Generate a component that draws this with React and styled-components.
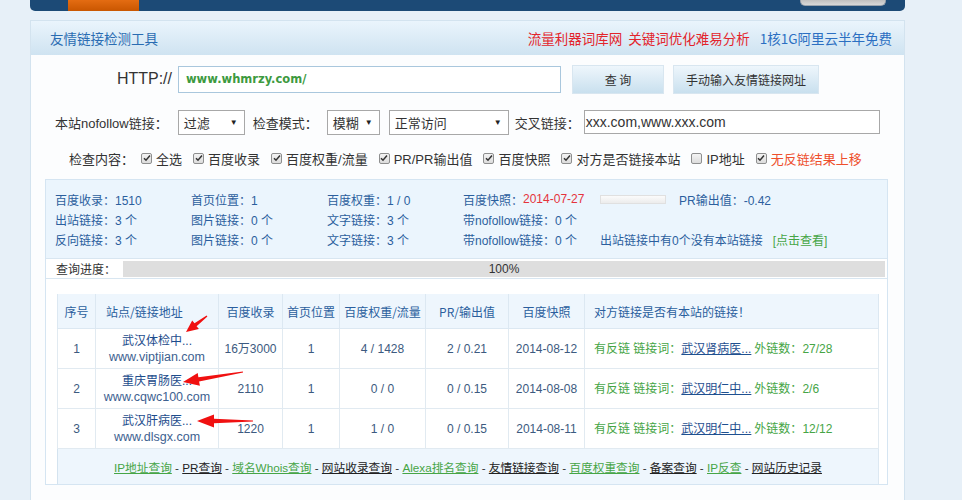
import React from "react";
import styled, { createGlobalStyle } from "styled-components";

const GlobalStyle = createGlobalStyle`
  html, body {
    margin: 0;
    padding: 0;
    background: #e7f0f8;
  }
  body {
    font-family: "Liberation Sans", "Noto Sans CJK SC", sans-serif;
    font-size: 12px;
    color: #333;
  }
`;

const Page = styled.div`
  position: relative;
  width: 875px;
  margin-left: 30px;
  height: 500px;
  overflow: hidden;
`;

const TopBar = styled.div`
  display: flex;
  justify-content: space-between;
  height: 11px;
  padding: 0 19px 0 38px;
  background: #1c4a76;
  border-radius: 0 0 5px 5px;
`;

const OrangeTab = styled.div`
  width: 71px;
  background: linear-gradient(#e46c12, #c95600);
`;

const GrayTab = styled.div`
  width: 84px;
  height: 5px;
  background: linear-gradient(#bfbfbf, #d8d8d8);
  border: 1px solid #9aa3ad;
  border-top: none;
  border-radius: 0 0 5px 5px;
`;

const Panel = styled.div`
  margin-top: 9px;
  background: #fcfdfe;
  border: 1px solid #d3e3ef;
  height: 480px;
`;

const PanelHeader = styled.div`
  display: flex;
  align-items: center;
  justify-content: space-between;
  height: 34px;
  padding: 0 12px 0 19px;
  background: linear-gradient(#eaf4fc, #cfe3f1);
  font-family: "Noto Sans CJK SC", sans-serif;
  font-size: 13.5px;
`;

const Title = styled.span`
  color: #2a6cb2;
`;

const HeaderLinks = styled.div`
  display: flex;
  gap: 6px;
`;

const HeaderLink = styled.a`
  color: ${(p) => (p.$blue ? "#2b6fc2" : "#e3242b")};
  margin-left: ${(p) => (p.$blue ? "4px" : "0")};
  text-decoration: none;
`;

const Body = styled.div`
  padding: 0 16px 0 14px;
`;

const UrlRow = styled.div`
  display: flex;
  align-items: center;
  height: 30px;
  margin-top: 9px;
`;

const HttpLabel = styled.span`
  width: 127px;
  padding-right: 6px;
  text-align: right;
  font-size: 16px;
  color: #333;
`;

const UrlInput = styled.div`
  box-sizing: border-box;
  width: 383px;
  height: 27px;
  display: flex;
  align-items: center;
  padding-left: 7px;
  background: #fff;
  border: 1px solid #a9c7dd;
  color: #3d9a3f;
  font-family: "DejaVu Sans", sans-serif;
  font-weight: bold;
  font-size: 11.5px;
`;

const Button = styled.button`
  box-sizing: border-box;
  width: ${(p) => p.$w}px;
  height: 29px;
  margin-left: ${(p) => p.$ml}px;
  background: linear-gradient(#eef6fc, #c9e0ee);
  border: 1px solid #d8e6f0;
  color: #333;
  font-family: "Noto Sans CJK SC", sans-serif;
  font-size: 12px;
  padding: 0;
`;

const OptionRow = styled.div`
  display: flex;
  align-items: center;
  height: 26px;
  margin-top: 15px;
  padding-left: 10px;
  font-family: "Liberation Sans", "Noto Sans CJK SC", sans-serif;
  font-size: 13px;
  color: #333;
`;

const Label = styled.span`
  margin-right: ${(p) => p.$mr || 0}px;
  white-space: nowrap;
`;

const Select = styled.div`
  box-sizing: border-box;
  display: flex;
  align-items: center;
  justify-content: space-between;
  width: ${(p) => p.$w}px;
  height: 25px;
  margin-right: ${(p) => p.$mr || 0}px;
  padding: 0 6px 0 5px;
  background: #fff;
  border: 1px solid #a8a8a8;
  font-size: 13px;
  color: #333;

  &::after {
    content: "▼";
    font-size: 8px;
    color: #222;
  }
`;

const CrossInput = styled.div`
  box-sizing: border-box;
  display: flex;
  align-items: center;
  width: 296px;
  height: 24px;
  padding-left: 1px;
  background: #fff;
  border: 1px solid #a8a8a8;
  font-size: 14px;
  color: #333;
`;

const CheckRow = styled.div`
  display: flex;
  align-items: center;
  height: 20px;
  margin-top: 13px;
  padding-left: 24px;
  font-size: 13px;
  color: #333;
`;

const CheckItem = styled.label`
  display: flex;
  align-items: center;
  margin-left: ${(p) => (p.$first ? 7 : 11)}px;
  color: ${(p) => (p.$red ? "#ee4f2c" : "#333")};
`;

const Box = styled.span`
  box-sizing: border-box;
  display: inline-flex;
  align-items: center;
  justify-content: center;
  width: 11px;
  height: 11px;
  margin-right: 4px;
  border: 1px solid #8e8f8f;
  border-radius: 2px;
  background: linear-gradient(#f4f4f4, #dcdcdc);
`;

const Checkbox = ({ checked }) => (
  <Box>
    {checked && (
      <svg width="8" height="8" viewBox="0 0 8 8">
        <path d="M1 4.2 L3 6.2 L7 1.6" fill="none" stroke="#333" strokeWidth="1.5" />
      </svg>
    )}
  </Box>
);

const ResultBox = styled.div`
  margin-top: 11px;
  border: 1px solid #d5e5f2;
  background: #fff;
`;

const InfoGrid = styled.div`
  display: grid;
  grid-template-columns: 136px 136px 136px 137px 1fr;
  grid-auto-rows: 20px;
  align-items: center;
  padding: 9px 9px 9px;
  background: #ebf5fd;
  color: #2b5f9e;
  font-size: 12px;
`;

const InfoCell = styled.span`
  display: flex;
  align-items: center;
  white-space: nowrap;
`;

const Red = styled.span`
  color: #e5333c;
`;

const Green = styled.span`
  color: #46a546;
  margin-left: ${(p) => p.$ml || 0}px;
`;

const MiniBar = styled.span`
  box-sizing: border-box;
  display: inline-block;
  width: 66px;
  height: 9px;
  margin-right: 13px;
  border: 1px solid #e0e0e0;
  background: linear-gradient(#fbfbfb, #ececec);
`;

const ProgressRow = styled.div`
  display: flex;
  align-items: center;
  height: 19px;
  border-top: 1px solid #d8e6f1;
  border-bottom: 1px solid #d8e6f1;
  background: #fff;
`;

const ProgressLabel = styled.span`
  width: 64px;
  padding-left: 10px;
  font-family: "Noto Sans CJK SC", sans-serif;
  font-size: 12px;
  color: #333;
`;

const ProgressBar = styled.div`
  flex: 1;
  height: 16px;
  margin: 0 2px 0 3px;
  background: #dedede;
  display: flex;
  align-items: center;
  justify-content: center;
  font-size: 12px;
  color: #333;
`;

const TableWrap = styled.div`
  padding: 15px 10px 0 11px;
  background: #fff;
`;

const Table = styled.table`
  width: 821px;
  border-collapse: collapse;
  table-layout: fixed;
  font-size: 12px;
  border-left: 1px solid #d4e3ef;
`;

const Th = styled.th`
  height: 34px;
  padding: 0 0 0 ${(p) => p.$pl || 0}px;
  background: #eef6fd;
  border: 1px solid #dce8f2;
  border-top: none;
  font-weight: normal;
  color: #2b5f9e;
  text-align: ${(p) => p.$align || "center"};
  font-family: "Noto Sans CJK SC", sans-serif;
`;

const Td = styled.td`
  height: 39px;
  padding: 0 0 0 ${(p) => p.$pl || 0}px;
  border: 1px solid #e1eaf1;
  color: #3c5a80;
  text-align: ${(p) => p.$align || "center"};
  white-space: nowrap;
  line-height: 16px;
`;

const SiteName = styled.div`
  color: #1d4c8c;
`;

const SiteUrl = styled.div`
  color: #3d6190;
  font-size: 12.5px;
`;

const LinkWord = styled.a`
  color: #1f5090;
  text-decoration: underline;
`;

const FooterCell = styled.td`
  height: 33px;
  background: #eef6fd;
  text-align: center;
  color: #333;
  font-size: 11.7px;
  border-right: 1px solid #dce8f2;
`;

const FootLink = styled.a`
  color: ${(p) => (p.$green ? "#46a546" : "#222")};
  text-decoration: underline;
`;

const Arrows = styled.svg`
  position: absolute;
  left: -30px;
  top: 0;
  pointer-events: none;
`;

const arrowPoints = (tx, ty, sx, sy, h, w, sw) => {
  const dx = sx - tx;
  const dy = sy - ty;
  const len = Math.hypot(dx, dy);
  const ux = dx / len;
  const uy = dy / len;
  const nx = -uy;
  const ny = ux;
  const bx = tx + ux * h;
  const by = ty + uy * h;
  const pts = [
    [tx, ty],
    [bx + nx * w, by + ny * w],
    [bx + nx * sw, by + ny * sw],
    [sx + nx * 0.6, sy + ny * 0.6],
    [sx - nx * 0.6, sy - ny * 0.6],
    [bx - nx * sw, by - ny * sw],
    [bx - nx * w, by - ny * w],
  ];
  return pts.map((p) => p.map((v) => v.toFixed(1)).join(",")).join(" ");
};

const checks = [
  ["全选", true],
  ["百度收录", true],
  ["百度权重/流量", true],
  ["PR/PR输出值", true],
  ["百度快照", true],
  ["对方是否链接本站", true],
  ["IP地址", false],
  ["无反链结果上移", true, true],
];

const rows = [
  ["1", "武汉体检中...", "www.viptjian.com", "16万3000", "1", "4 / 1428", "2 / 0.21", "2014-08-12", "武汉肾病医...", "27/28"],
  ["2", "重庆胃肠医...", "www.cqwc100.com", "2110", "1", "0 / 0", "0 / 0.15", "2014-08-08", "武汉明仁中...", "2/6"],
  ["3", "武汉肝病医...", "www.dlsgx.com", "1220", "1", "1 / 0", "0 / 0.15", "2014-08-11", "武汉明仁中...", "12/12"],
];

const footLinks = [
  ["IP地址查询", true],
  ["PR查询", false],
  ["域名Whois查询", true],
  ["网站收录查询", false],
  ["Alexa排名查询", true],
  ["友情链接查询", false],
  ["百度权重查询", true],
  ["备案查询", false],
  ["IP反查", true],
  ["网站历史记录", false],
];

const colWidths = [38, 123, 64, 57, 86, 83, 76, 294];

export default function App() {
  return (
    <>
      <GlobalStyle />
      <Page>
        <TopBar>
          <OrangeTab />
          <GrayTab />
        </TopBar>
        <Panel>
          <PanelHeader>
            <Title>友情链接检测工具</Title>
            <HeaderLinks>
              <HeaderLink>流量利器词库网</HeaderLink>
              <HeaderLink>关键词优化难易分析</HeaderLink>
              <HeaderLink $blue>1核1G阿里云半年免费</HeaderLink>
            </HeaderLinks>
          </PanelHeader>
          <Body>
            <UrlRow>
              <HttpLabel>HTTP://</HttpLabel>
              <UrlInput>www.whmrzy.com/</UrlInput>
              <Button $w={92} $ml={11}>查 询</Button>
              <Button $w={146} $ml={9}>手动输入友情链接网址</Button>
            </UrlRow>
            <OptionRow>
              <Label $mr={10}>本站nofollow链接：</Label>
              <Select $w={67} $mr={8}>过滤</Select>
              <Label $mr={9}>检查模式：</Label>
              <Select $w={53} $mr={9}>模糊</Select>
              <Select $w={120} $mr={6}>正常访问</Select>
              <Label $mr={4}>交叉链接：</Label>
              <CrossInput>xxx.com,www.xxx.com</CrossInput>
            </OptionRow>
            <CheckRow>
              <Label>检查内容：</Label>
              {checks.map(([text, on, red], i) => (
                <CheckItem key={text} $first={i === 0} $red={red}>
                  <Checkbox checked={on} />
                  {text}
                </CheckItem>
              ))}
            </CheckRow>
            <ResultBox>
              <InfoGrid>
                <InfoCell>百度收录：1510</InfoCell>
                <InfoCell>首页位置：1</InfoCell>
                <InfoCell>百度权重：1 / 0</InfoCell>
                <InfoCell>
                  百度快照：<Red>2014-07-27</Red>
                </InfoCell>
                <InfoCell>
                  <MiniBar />
                  PR输出值：-0.42
                </InfoCell>

                <InfoCell>出站链接：3 个</InfoCell>
                <InfoCell>图片链接：0 个</InfoCell>
                <InfoCell>文字链接：3 个</InfoCell>
                <InfoCell>带nofollow链接：0 个</InfoCell>
                <InfoCell />

                <InfoCell>反向链接：3 个</InfoCell>
                <InfoCell>图片链接：0 个</InfoCell>
                <InfoCell>文字链接：3 个</InfoCell>
                <InfoCell>带nofollow链接：0 个</InfoCell>
                <InfoCell>
                  出站链接中有0个没有本站链接
                  <Green $ml={10}>[点击查看]</Green>
                </InfoCell>
              </InfoGrid>
              <ProgressRow>
                <ProgressLabel>查询进度：</ProgressLabel>
                <ProgressBar>100%</ProgressBar>
              </ProgressRow>
              <TableWrap>
                <Table>
                  <colgroup>
                    {colWidths.map((w, i) => (
                      <col key={i} style={{ width: w }} />
                    ))}
                  </colgroup>
                  <thead>
                    <tr>
                      <Th>序号</Th>
                      <Th $align="left" $pl={10}>站点/链接地址</Th>
                      <Th>百度收录</Th>
                      <Th>首页位置</Th>
                      <Th>百度权重/流量</Th>
                      <Th>PR/输出值</Th>
                      <Th>百度快照</Th>
                      <Th $align="left" $pl={9}>对方链接是否有本站的链接！</Th>
                    </tr>
                  </thead>
                  <tbody>
                    {rows.map((r) => (
                      <tr key={r[0]}>
                        <Td>{r[0]}</Td>
                        <Td>
                          <SiteName>{r[1]}</SiteName>
                          <SiteUrl>{r[2]}</SiteUrl>
                        </Td>
                        <Td>{r[3]}</Td>
                        <Td>{r[4]}</Td>
                        <Td>{r[5]}</Td>
                        <Td>{r[6]}</Td>
                        <Td>{r[7]}</Td>
                        <Td $align="left" $pl={9}>
                          <Green>有反链 链接词：</Green>
                          <LinkWord>{r[8]}</LinkWord>
                          <Green $ml={3}>外链数：{r[9]}</Green>
                        </Td>
                      </tr>
                    ))}
                    <tr>
                      <FooterCell colSpan={8}>
                        {footLinks.map(([t, g], i) => (
                          <React.Fragment key={t}>
                            {i > 0 && " - "}
                            <FootLink $green={g}>{t}</FootLink>
                          </React.Fragment>
                        ))}
                      </FooterCell>
                    </tr>
                  </tbody>
                </Table>
              </TableWrap>
            </ResultBox>
          </Body>
        </Panel>
        <Arrows width="962" height="500">
          <polygon fill="#f01010" points={arrowPoints(186, 332, 207, 316, 12, 5.5, 1.8)} />
          <polygon fill="#f01010" points={arrowPoints(183, 382, 243, 372, 16, 6.5, 2.2)} />
          <polygon fill="#f01010" points={arrowPoints(197, 421, 253, 421, 17, 6.5, 2.2)} />
        </Arrows>
      </Page>
    </>
  );
}
